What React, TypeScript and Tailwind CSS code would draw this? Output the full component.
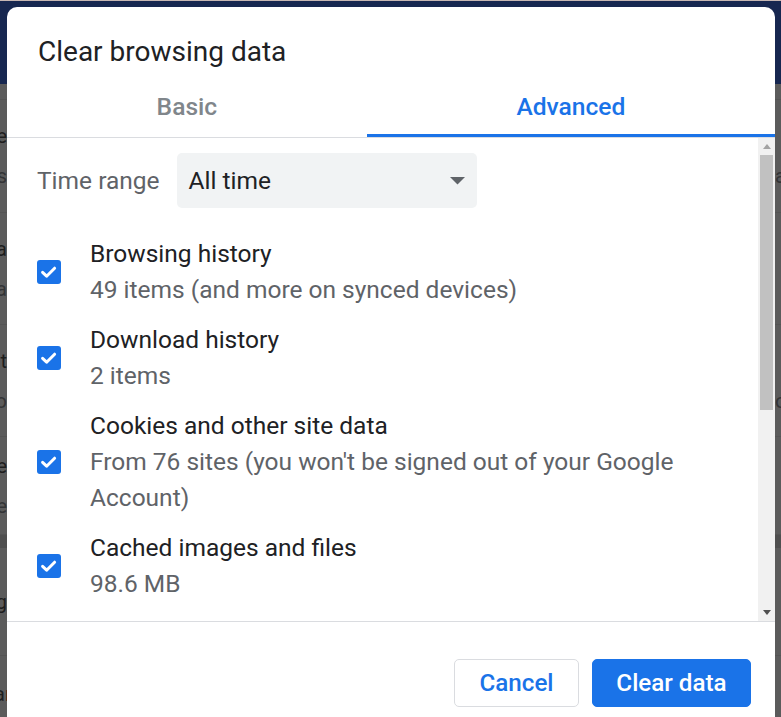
import React from "react";

const items = [
  { title: "Browsing history", sub: "49 items (and more on synced devices)" },
  { title: "Download history", sub: "2 items" },
  {
    title: "Cookies and other site data",
    sub: "From 76 sites (you won't be signed out of your Google Account)",
  },
  { title: "Cached images and files", sub: "98.6 MB" },
  { title: "Passwords and other sign-in data", sub: "None" },
  { title: "Autofill form data", sub: "None" },
];

// dimmed settings page behind the dialog; only its edges show
const pageRows = [
  { h: "h-[113px]", left: ["Sync and Google services are", "Manage your other Google services"], right: ["", "abc"] },
  { h: "h-[112px]", left: ["Customize your Chrome profile data", "Import bookmarks and settings data"], right: ["", ""] },
  { h: "h-[112px]", left: ["Turn on sync and get the most out", "Allow Chrome sign-in to go"], right: ["", "ov"] },
  { h: "h-[98px]", left: ["Make sure your passwords are the same", "See what Google can use to personalize your experience the"], right: ["", ""] },
];

function Fragment({ lines, side }: { lines: string[]; side: "left" | "right" }) {
  return (
    <div
      className={
        side === "left"
          ? "w-[7px] overflow-hidden flex flex-col items-end justify-center"
          : "w-[6px] overflow-hidden flex flex-col items-start justify-center"
      }
    >
      {lines.map((t, i) => (
        <div
          key={i}
          className={
            i === 0
              ? "whitespace-nowrap text-[20px] leading-[40px] text-[#1e1e1e]"
              : "whitespace-nowrap text-[20px] leading-[40px] text-[#333436]"
          }
        >
          {t || "\u00a0"}
        </div>
      ))}
    </div>
  );
}

function Backdrop() {
  return (
    <div className="flex flex-col h-full">
      <div className="h-px bg-[#c7b7b3]" />
      <div className="h-[83px] bg-[#172750]" />
      <div className="h-[16px] bg-[#5b5b5b] border-b border-[#545454]" />
      {pageRows.map((r, i) => (
        <div key={i} className={`${r.h} flex justify-between bg-[#5b5b5b] border-b border-[#545454]`}>
          <Fragment lines={r.left} side="left" />
          <Fragment lines={r.right} side="right" />
        </div>
      ))}
      <div className="h-[13px] bg-[#4f4f4f]" />
      <div className="h-[108px] flex justify-between bg-[#5b5b5b] border-b border-[#545454]">
        <Fragment lines={["Manage search engines and site searching"]} side="left" />
        <Fragment lines={[""]} side="right" />
      </div>
      <div className="flex-1 flex justify-between bg-[#5b5b5b]">
        <div className="w-[7px] overflow-hidden flex justify-end pt-[23px]">
          <span className="whitespace-nowrap text-[20px] leading-[30px] text-[#1e1e1e]">Sea</span>
          <span className="shrink-0 w-[2px] overflow-hidden whitespace-nowrap text-[20px] leading-[30px] text-[#5a1d14]">r</span>
        </div>
      </div>
    </div>
  );
}

function CheckBox() {
  return (
    <svg width="24" height="24" viewBox="0 0 24 24" className="shrink-0">
      <rect width="24" height="24" rx="3" fill="#1a73e8" />
      <path
        d="M5.6 12.4L9.6 16.2L17.6 8.2"
        fill="none"
        stroke="#fff"
        strokeWidth="3"
        strokeLinecap="round"
        strokeLinejoin="round"
      />
    </svg>
  );
}

function Scrollbar() {
  return (
    <div className="w-[17px] shrink-0 bg-[#f1f1f1] flex flex-col">
      <div className="h-[17px] flex items-center justify-center">
        <svg width="8" height="5" viewBox="0 0 8 5">
          <polygon points="0,5 8,5 4,0" fill="#a3a3a3" />
        </svg>
      </div>
      <div className="h-[255px] mx-[2px] bg-[#c1c1c1]" />
      <div className="flex-1" />
      <div className="h-[17px] flex items-center justify-center">
        <svg width="8" height="5" viewBox="0 0 8 5">
          <polygon points="0,0 8,0 4,5" fill="#505050" />
        </svg>
      </div>
    </div>
  );
}

export default function App() {
  return (
    <div className="relative h-[717px] w-full overflow-hidden bg-[#5b5b5b] font-[family-name:Roboto,sans-serif]">
      <Backdrop />

      <div className="absolute left-[7px] top-[7px] w-[768px] rounded-[10px] bg-white">
        <h1 className="px-[31px] pt-[27px] text-[28px] leading-[36px] font-normal text-[#202124]">
          Clear browsing data
        </h1>

        {/* tabs */}
        <div className="flex border-b border-[#dadce0]">
          <div className="flex-auto px-4 pt-[21px] pb-[11px] text-center text-[24.6px] leading-[32px] font-medium text-[#80868b] border-b-[3px] border-transparent">
            Basic
          </div>
          <div className="flex-auto px-4 pt-[21px] pb-[11px] text-center text-[24.6px] leading-[32px] font-medium text-[#1a73e8] border-b-[3px] border-[#1a73e8]">
            Advanced
          </div>
        </div>

        {/* scrolling body */}
        <div className="flex h-[484px] overflow-hidden border-b border-[#dadce0]">
          <div className="flex-1 min-w-0 pl-[30px] pr-[30px] pt-[15px]">
            <div className="flex items-center gap-[17px]">
              <span className="shrink-0 text-[24.5px] leading-[36px] text-[#5f6368]">Time range</span>
              <div className="w-[300px] h-[55px] rounded-[5px] bg-[#f1f3f4] flex items-center justify-between pl-[12px] pr-[12px]">
                <span className="text-[24.5px] leading-[36px] text-[#202124]">All time</span>
                <svg width="15" height="8" viewBox="0 0 15 8">
                  <polygon points="0,0 15,0 7.5,7.5" fill="#5f6368" />
                </svg>
              </div>
            </div>

            <div className="mt-[28px] flex flex-col gap-[14px]">
              {items.map((it) => (
                <div key={it.title} className="flex items-center gap-[29px]">
                  <CheckBox />
                  <div className="min-w-0 text-[24.5px] leading-[36px]">
                    <div className="text-[#202124]">{it.title}</div>
                    <div className="text-[#5f6368]">{it.sub}</div>
                  </div>
                </div>
              ))}
            </div>
          </div>
          <Scrollbar />
        </div>

        {/* footer */}
        <div className="flex justify-end gap-[13px] pt-[37px] pr-[24px] pb-[24px]">
          <button className="w-[125px] h-[48px] rounded-[5px] border border-[#dadce0] bg-white text-[24.2px] font-medium text-[#1a73e8]">
            Cancel
          </button>
          <button className="w-[159px] h-[48px] rounded-[5px] border border-[#1a73e8] bg-[#1a73e8] text-[24.2px] font-medium text-white">
            Clear data
          </button>
        </div>
      </div>
    </div>
  );
}
